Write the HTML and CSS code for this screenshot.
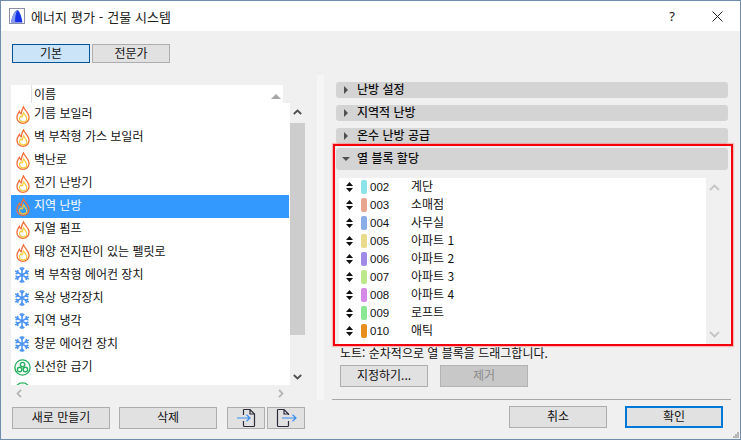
FILE: index.html
```html
<!DOCTYPE html>
<html lang="ko">
<head>
<meta charset="utf-8">
<title>에너지 평가 - 건물 시스템</title>
<link rel="stylesheet" href="styles.css">
</head>
<body>
<svg class="defs" width="0" height="0" aria-hidden="true">
  <symbol id="flame" viewBox="0 0 14 18">
    <path d="M7.5 .8C8.3 4 12.6 6.3 13 10.8 13.3 14.6 10.4 17.3 7 17.3 3.5 17.3 .8 14.7 1 11 1.1 8.6 2.4 7 3.4 5.4 3.8 6.8 4.3 7.4 5.2 7.8 5.6 5.2 6.2 2.8 7.5 .8Z" fill="currentColor" stroke="#f0703c" stroke-width="1.3"/>
    <path d="M7.6 6.8C8.6 9 10.8 10.4 10.8 12.8 10.8 14.8 9 15.9 7 15.9 5 15.9 3.4 14.4 3.6 12.3 3.7 11.3 4.3 10.5 4.9 9.9 5.3 10.8 5.9 11 6.5 10.8 6.7 9.4 7 8 7.6 6.8Z" fill="none" stroke="#f8cc38" stroke-width="1.2"/>
  </symbol>
  <symbol id="snow" viewBox="0 0 14 16">
    <g fill="none" stroke="#4b93f2" stroke-width="1.5">
      <path d="M7 0V16M.2 4 13.800 12M.2 12 13.800 4"/>
      <path d="M4.800 .9 7 3 9.200 .9M4.800 15.100 7 13 9.200 15.100M.6 7 3.200 5.800 2.500 2.800M13.400 9 10.800 10.200 11.500 13.200M.6 9 3.200 10.200 2.500 13.200M13.400 7 10.800 5.800 11.500 2.800"/>
    </g>
  </symbol>
  <symbol id="fan" viewBox="0 0 17 17">
    <circle cx="8.500" cy="8.500" r="7.600" fill="none" stroke="#27b15f" stroke-width="1.400"/>
    <g fill="none" stroke="#27b15f" stroke-width="1.400">
      <circle cx="8.500" cy="5.600" r="2.200"/>
      <circle cx="5.600" cy="10.500" r="2.200"/>
      <circle cx="11.400" cy="10.500" r="2.200"/>
    </g>
  </symbol>
  <symbol id="updown" viewBox="0 0 7 10">
    <path d="M3.500 0 7 4H0ZM0 6H7L3.500 10Z" fill="#111"/>
  </symbol>
</svg>

<div class="window">
  <header class="titlebar">
    <svg class="logo" width="16" height="16" viewBox="0 0 16 16">
      <rect x=".5" y=".5" width="15" height="15" fill="#fff" stroke="#8a8fa8"/>
      <path d="M2 14.500C3 9 5 3 8.500 2 11 3.500 12.500 9 13.500 14.500Z" fill="#1733e8"/>
      <path d="M2 14.500C3 9 5 3 8.500 2 6.500 5 6 10 6 14.500Z" fill="#8a9cf0"/>
    </svg>
    <span class="title">에너지 평가 - 건물 시스템</span>
    <span class="help">?</span>
    <span class="close">
      <svg width="11" height="11" viewBox="0 0 11 11"><path d="M.5 .5 10.500 10.500M10.500 .5 .5 10.500" stroke="#222" fill="none"/></svg>
    </span>
  </header>

  <div class="body">
    <nav class="tabs">
      <button class="btn tab tab-on">기본</button>
      <button class="btn tab">전문가</button>
    </nav>

    <main class="main">
      <section class="left">
        <div class="listbox">
          <div class="list-head">
            <span class="head-gap"></span>
            <span class="head-label">이름</span>
            <span class="sort"></span>
          </div>
          <div class="list-mid">
            <ul class="rows">
              <li class="row"><svg class="ic-flame"><use href="#flame"/></svg><span>기름 보일러</span></li>
              <li class="row"><svg class="ic-flame"><use href="#flame"/></svg><span>벽 부착형 가스 보일러</span></li>
              <li class="row"><svg class="ic-flame"><use href="#flame"/></svg><span>벽난로</span></li>
              <li class="row"><svg class="ic-flame"><use href="#flame"/></svg><span>전기 난방기</span></li>
              <li class="row row-on"><svg class="ic-flame"><use href="#flame"/></svg><span>지역 난방</span></li>
              <li class="row"><svg class="ic-flame"><use href="#flame"/></svg><span>지열 펌프</span></li>
              <li class="row"><svg class="ic-flame"><use href="#flame"/></svg><span>태양 전지판이 있는 펠릿로</span></li>
              <li class="row"><svg class="ic-snow"><use href="#snow"/></svg><span>벽 부착형 에어컨 장치</span></li>
              <li class="row"><svg class="ic-snow"><use href="#snow"/></svg><span>옥상 냉각장치</span></li>
              <li class="row"><svg class="ic-snow"><use href="#snow"/></svg><span>지역 냉각</span></li>
              <li class="row"><svg class="ic-snow"><use href="#snow"/></svg><span>창문 에어컨 장치</span></li>
              <li class="row"><svg class="ic-fan"><use href="#fan"/></svg><span>신선한 급기</span></li>
              <li class="row"><svg class="ic-fan"><use href="#fan"/></svg></li>
            </ul>
            <div class="vscroll">
              <svg class="chev" width="9" height="6" viewBox="0 0 9 6"><path d="M.8 5 4.500 1.500 8.200 5" fill="none" stroke="#505050" stroke-width="1.800"/></svg>
              <div class="thumb"></div>
              <svg class="chev" width="9" height="6" viewBox="0 0 9 6"><path d="M.8 1 4.500 4.500 8.200 1" fill="none" stroke="#505050" stroke-width="1.800"/></svg>
            </div>
          </div>
          <div class="hscroll">
            <svg width="6" height="9" viewBox="0 0 6 9"><path d="M5 .8 1.500 4.500 5 8.200" fill="none" stroke="#b4b4b4" stroke-width="1.800"/></svg>
            <svg width="6" height="9" viewBox="0 0 6 9"><path d="M1 .8 4.500 4.500 1 8.200" fill="none" stroke="#b4b4b4" stroke-width="1.800"/></svg>
          </div>
        </div>
        <div class="left-actions">
          <button class="btn wide">새로 만들기</button>
          <button class="btn wide">삭제</button>
          <button class="btn square first">
            <svg width="24" height="20" viewBox="0 0 24 20"><path d="M9.500 1.500H16L20.500 6V17.500Q20.500 18.500 19.500 18.500H10.500Q9.500 18.500 9.500 17.500V13M9.500 7V1.500M16 1.500V6H20.500" fill="none" stroke="#2c2c3c" stroke-width="1.200"/><path d="M3 10H16M12.500 6.800 16 10 12.500 13.200" fill="none" stroke="#3b8df0" stroke-width="1.200"/></svg>
          </button>
          <button class="btn square">
            <svg width="24" height="20" viewBox="0 0 24 20"><path d="M3.500 1.500H10L14.500 6V7M14.500 13V17.500Q14.500 18.500 13.500 18.500H4.500Q3.500 18.500 3.500 17.500V1.500M10 1.500V6H14.500" fill="none" stroke="#2c2c3c" stroke-width="1.200"/><path d="M8 10H22M18.500 6.800 22 10 18.500 13.200" fill="none" stroke="#3b8df0" stroke-width="1.200"/></svg>
          </button>
        </div>
      </section>

      <div class="splitter"></div>

      <section class="right">
        <div class="bar"><i class="tri-r"></i>난방 설정</div>
        <div class="bar"><i class="tri-r"></i>지역적 난방</div>
        <div class="bar"><i class="tri-r"></i>온수 난방 공급</div>
        <div class="blocks">
          <div class="bar bar-open"><i class="tri-d"></i>열 블록 할당</div>
          <div class="zone-list">
            <ul class="zones">
              <li class="zone"><svg class="updown"><use href="#updown"/></svg><i class="sw c1"></i><span class="num">002</span><span class="name">계단</span></li>
              <li class="zone"><svg class="updown"><use href="#updown"/></svg><i class="sw c2"></i><span class="num">003</span><span class="name">소매점</span></li>
              <li class="zone"><svg class="updown"><use href="#updown"/></svg><i class="sw c3"></i><span class="num">004</span><span class="name">사무실</span></li>
              <li class="zone"><svg class="updown"><use href="#updown"/></svg><i class="sw c4"></i><span class="num">005</span><span class="name">아파트 1</span></li>
              <li class="zone"><svg class="updown"><use href="#updown"/></svg><i class="sw c5"></i><span class="num">006</span><span class="name">아파트 2</span></li>
              <li class="zone"><svg class="updown"><use href="#updown"/></svg><i class="sw c6"></i><span class="num">007</span><span class="name">아파트 3</span></li>
              <li class="zone"><svg class="updown"><use href="#updown"/></svg><i class="sw c7"></i><span class="num">008</span><span class="name">아파트 4</span></li>
              <li class="zone"><svg class="updown"><use href="#updown"/></svg><i class="sw c8"></i><span class="num">009</span><span class="name">로프트</span></li>
              <li class="zone"><svg class="updown"><use href="#updown"/></svg><i class="sw c9"></i><span class="num">010</span><span class="name">애틱</span></li>
            </ul>
            <div class="zone-scroll">
              <svg width="11" height="7" viewBox="0 0 11 7"><path d="M1 6 5.500 1.500 10 6" fill="none" stroke="#c4c4c4" stroke-width="1.800"/></svg>
              <svg width="11" height="7" viewBox="0 0 11 7"><path d="M1 1 5.500 5.500 10 1" fill="none" stroke="#c4c4c4" stroke-width="1.800"/></svg>
            </div>
          </div>
          <div class="highlight"></div>
        </div>
        <p class="note">노트: 순차적으로 열 블록을 드래그합니다.</p>
        <div class="zone-actions">
          <button class="btn mid">지정하기...</button>
          <button class="btn mid off">제거</button>
        </div>
        <hr class="sep">
        <div class="footer">
          <button class="btn wide">취소</button>
          <button class="btn wide ok">확인</button>
        </div>
      </section>
    </main>
  </div>
  <svg class="grip" width="6" height="6" viewBox="0 0 6 6"><path d="M4 0h2v2H4zM2 2h2v2H2zM4 2h2v2H4zM0 4h2v2H0zM2 4h2v2H2zM4 4h2v2H4z" fill="#b8b8b8"/></svg>
</div>
</body>
</html>
```

FILE: styles.css
```css
* { box-sizing: border-box; }
html, body { margin: 0; padding: 0; }
body {
  width: 741px;
  height: 440px;
  overflow: hidden;
  font-family: "Noto Sans CJK KR", "Noto Sans", sans-serif;
  font-size: 12px;
  color: #111;
}
.defs { position: absolute; }
ul { list-style: none; margin: 0; padding: 0; }

.window {
  position: relative;
  width: 741px;
  height: 440px;
  border: 1px solid #6f8dac;
  background: #f0f0f0;
  display: flex;
  flex-direction: column;
}

.titlebar {
  height: 30px;
  flex: none;
  background: #fff;
  display: flex;
  align-items: center;
  padding-left: 8px;
}
.logo { flex: none; }
.title { margin-left: 6px; font-size: 13px; color: #222; letter-spacing: .1px; }
.help { margin-left: auto; width: 46px; text-align: center; font-size: 13px; font-family: "Noto Sans", sans-serif; }
.close { width: 45px; display: flex; justify-content: center; }

.body { flex: 1; display: flex; flex-direction: column; min-height: 0; }

.btn {
  font: inherit;
  color: #111;
  background: #e1e1e1;
  border: 1px solid #adadad;
  padding: 0 0 2px;
  height: 22px;
  line-height: 1;
  display: flex;
  align-items: center;
  justify-content: center;
  flex: none;
}

.tabs { display: flex; gap: 2px; padding: 13px 0 0 11px; }
.tab { width: 78px; height: 19px; }
.tab-on { background: #cce4f7; border-color: #005499; }

.main { flex: 1; display: flex; align-items: stretch; min-height: 0; margin-top: 12px; }

.left { width: 304px; flex: none; padding: 10px 0 0 10px; }
.listbox { height: 316px; display: flex; flex-direction: column; }
.list-head { height: 18px; width: 272px; background: #fff; display: flex; flex: none; position: relative; }
.head-gap { width: 20px; }
.head-label { flex: 1; border-left: 1px solid #e0e0e0; padding-left: 2px; line-height: 17px; }
.sort {
  width: 0; height: 0;
  border-left: 5px solid transparent;
  border-right: 5px solid transparent;
  border-bottom: 5px solid #a8a8a8;
  margin: 9px 2px 0 0;
}
.list-mid { height: 282px; display: flex; flex: none; }
.rows { width: 279px; background: #fff; overflow: hidden; flex: none; }
.row { height: 23px; display: flex; align-items: center; position: relative; padding: 0 0 4px 23px; color: #fff; }
.row > span { color: #111; }
.row svg { position: absolute; }
.ic-flame { left: 5px; top: 3px; width: 14px; height: 18px; }
.ic-snow { left: 4px; top: 3px; width: 14px; height: 16px; }
.ic-fan { left: 3px; top: 3px; width: 17px; height: 17px; }
.row-on { background: #3399ff; margin-right: 1px; color: transparent; }
.row-on > span { color: #fff; }

.vscroll { width: 15px; display: flex; flex-direction: column; align-items: center; padding-top: 6px; }
.thumb { width: 15px; height: 212px; background: #cdcdcd; margin: 8px 0 39px; flex: none; }
.hscroll { height: 16px; display: flex; justify-content: space-between; align-items: center; width: 279px; padding: 0 6px 0 5px; }

.left-actions { display: flex; margin: 6px 0 0 1px; }
.wide { width: 98px; }
.left-actions .wide + .wide { margin-left: 9px; }
.square { width: 38px; margin-left: 2px; padding: 0; }
.square.first { margin-left: 10px; }

.splitter { width: 7px; margin-left: 12px; background: #f6f6f6; height: 325px; flex: none; }

.right { flex: 1; padding: 7px 12px 0 12px; min-width: 0; }
.bar {
  height: 16px;
  margin-bottom: 7px;
  background: #d4d4d4;
  border-radius: 3px;
  display: flex;
  align-items: center;
  font-weight: 500;
  padding: 0 0 3px 21px;
  position: relative;
}
.tri-r, .tri-d { position: absolute; width: 0; height: 0; }
.tri-r {
  left: 8px; top: 4px;
  border-top: 4px solid transparent;
  border-bottom: 4px solid transparent;
  border-left: 4px solid #505050;
}
.tri-d {
  left: 6px; top: 9px;
  border-left: 4px solid transparent;
  border-right: 4px solid transparent;
  border-top: 4px solid #505050;
}
.blocks { position: relative; margin-top: -3px; }
.bar-open { height: 22px; margin-bottom: 8px; }
.zone-list { display: flex; height: 166px; margin-left: 3px; }
.zones { width: 367px; height: 166px; background: #fff; flex: none; }
.zone { height: 18px; display: flex; align-items: center; position: relative; }
.updown { width: 7px; height: 10px; margin-left: 7px; flex: none; }
.sw { width: 6px; height: 14px; border-radius: 2px; margin-left: 8px; flex: none; }
.num { font-family: "Liberation Sans", sans-serif; font-size: 11.500px; width: 41px; margin-left: 3px; flex: none; }
.name { padding-bottom: 3px; }
.c1 { background: #8de4e8; }
.c2 { background: #e8a68e; }
.c3 { background: #8aade8; }
.c4 { background: #e8dc8a; }
.c5 { background: #a08ae8; }
.c6 { background: #bce88a; }
.c7 { background: #d68ae8; }
.c8 { background: #8ae892; }
.c9 { background: #e88e1e; }
.zone-scroll { flex: 1; display: flex; flex-direction: column; justify-content: space-between; padding: 6px 0 6px 3px; }

.highlight {
  position: absolute;
  left: -3px; right: -5px; top: -4px; bottom: -2px;
  border: 2px solid #f5000a;
  box-shadow: 0 0 1px 1px rgba(255, 120, 120, .45);
}

.note { margin: 0 0 0 4px; height: 21px; line-height: 17px; font-size: 12px; }
.zone-actions { display: flex; gap: 12px; margin-left: 4px; }
.mid { width: 88px; }
.off { background: #c8c8c8; color: #8c8c8c; border-color: #b4b4b4; }
.sep { border: 0; height: 1px; background: #a8a8a8; margin: 12px -3px 0 -4px; }
.footer { display: flex; justify-content: flex-end; gap: 18px; margin: 6px 5px 0 0; }
.footer .wide { height: 22px; }
.ok { border: 2px solid #0078d7; }

.grip { position: absolute; right: 1px; bottom: 1px; }
```
